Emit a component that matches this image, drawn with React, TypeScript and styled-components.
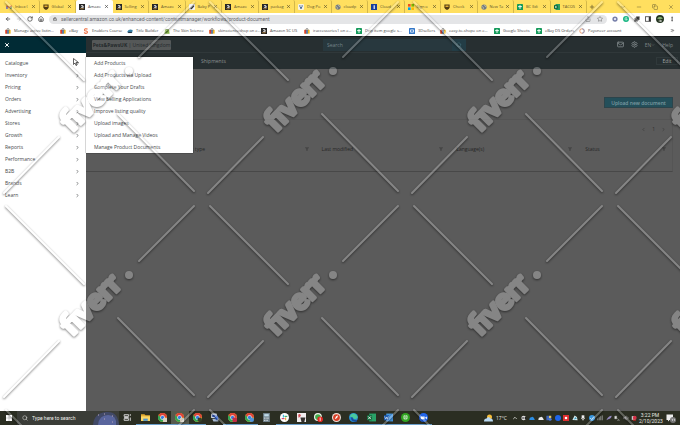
import React from "react";
import styled, { createGlobalStyle } from "styled-components";
import {
  ArrowLeft, ArrowRight, RotateCw, Home, Lock, Share, Star, Puzzle, MoreVertical, X, Plus, ChevronDown,
  ChevronRight, ChevronLeft, ChevronUp, Minus, Copy, Mail, Settings, Search, Filter, ChevronsRight,
} from "lucide-react";

const Global = createGlobalStyle`
  * { box-sizing: border-box; }
  body { margin: 0; background: #5b5b5b; }
  button, input, table { font: inherit; color: inherit; }
  button { border: 0; padding: 0; background: none; display: flex; align-items: center; justify-content: center; }
  a { color: inherit; text-decoration: none; }
  svg { flex: none; display: block; }
`;

const Screen = styled.div`
  min-height: 100vh;
  display: flex;
  flex-direction: column;
  font-family: "Open Sans", sans-serif;
  font-size: 5px;
  line-height: 6px;
  color: #333;
  overflow: hidden;
`;

/* ---------- browser ---------- */
const TabStrip = styled.div`
  display: flex;
  align-items: center;
  height: 13px;
  padding-left: 3px;
  background: #ffdf5f;
  font-size: 4px;
`;
const Tab = styled.div<{ $active?: boolean }>`
  flex: 1 1 0;
  min-width: 0;
  height: 13px;
  padding: 0 3px;
  display: flex;
  align-items: center;
  gap: 3px;
  color: ${(p) => (p.$active ? "#444" : "#5c512a")};
  background: ${(p) => (p.$active ? "#fff" : "transparent")};
  border-radius: 2px 2px 0 0;
  border-right: 1px solid ${(p) => (p.$active ? "#fff" : "#d4b84a")};
`;
const TabTitle = styled.span`
  flex: 1;
  min-width: 0;
  white-space: nowrap;
`;
const WindowControls = styled.div`
  flex: none;
  width: 93px;
  display: flex;
  align-items: center;
  justify-content: space-between;
  padding: 0 6px 0 2px;
  color: #6d6132;
`;
const ControlGroup = styled.div`
  display: flex;
  align-items: center;
  gap: 10px;
`;
const Toolbar = styled.div`
  display: flex;
  align-items: center;
  gap: 5px;
  height: 12px;
  padding: 0 5px;
  background: #fff;
  color: #444;
`;
const Omnibox = styled.form`
  flex: 1;
  display: flex;
  align-items: center;
  gap: 4px;
  height: 9px;
  padding: 0 4px;
  border-radius: 5px;
  background: #e4e5e7;
  color: #666;
`;
const UrlInput = styled.input`
  flex: 1;
  min-width: 0;
  height: 8px;
  padding: 0;
  border: 0;
  outline: 0;
  background: transparent;
  color: #66686c;
  font-family: Roboto, sans-serif;
`;
const OmniIcons = styled.div`
  display: flex;
  align-items: center;
  gap: 6px;
`;
const ToolIcons = styled.div`
  display: flex;
  align-items: center;
  gap: 5px;
`;
const Bookmarks = styled.nav`
  display: flex;
  align-items: center;
  height: 12px;
  padding: 0 5px;
  background: #fff;
  border-bottom: 1px solid #16191a;
  font-size: 4px;
`;
const Bookmark = styled.a<{ $w: number }>`
  width: ${(p) => p.$w}px;
  display: flex;
  align-items: center;
  gap: 3px;
  white-space: nowrap;
  color: #444;
  &:last-of-type { flex: 1; }
`;

/* ---------- application ---------- */
const AppGrid = styled.div`
  flex: 1;
  display: grid;
  grid-template-columns: 86px minmax(0, 1fr);
`;
const Sidebar = styled.aside`
  position: relative;
  background: #fff;
`;
const SideTop = styled.div`
  height: 16px;
  display: flex;
  align-items: center;
  padding-left: 4px;
  background: #012b35;
  color: #fff;
`;
const MenuList = styled.ul`
  list-style: none;
  margin: 0;
  padding: 4px 6px 0 5px;
`;
const MenuItem = styled.li`
  height: 12px;
`;
const MenuButton = styled.button`
  width: 100%;
  height: 12px;
  justify-content: space-between;
  color: #45494b;
`;
const Flyout = styled.ul`
  position: absolute;
  z-index: 2;
  left: 86px;
  top: 20px;
  width: 107px;
  margin: 0;
  padding: 0 8px;
  list-style: none;
  background: #fff;
  box-shadow: 0 0 1px #111;
  color: #45494b;
`;
const FlyItem = styled.li`
  height: 12px;
  display: flex;
  align-items: center;
  white-space: nowrap;
`;
const Pointer = styled.svg`
  position: absolute;
  z-index: 3;
  left: 73px;
  top: 21px;
`;
const Main = styled.main`
  background: #5b5b5b;
`;
const Header = styled.header`
  display: flex;
  align-items: center;
  height: 16px;
  padding: 0 7px 0 6px;
  background: #272f31;
  border-bottom: 1px solid #30383a;
  color: #7d8587;
`;
const Account = styled.button`
  width: 79px;
  height: 10px;
  border-radius: 1px;
  background: #555858;
  color: #24292b;
  white-space: pre;
`;
const SearchForm = styled.form`
  display: flex;
  width: 143px;
  height: 12px;
  margin: 0 auto 0 152px;
  background: #28383e;
`;
const SearchInput = styled.input`
  flex: 1;
  min-width: 0;
  padding: 0 4px;
  border: 0;
  background: transparent;
  &::placeholder { color: #75858a; opacity: 1; }
`;
const SearchButton = styled.button`
  width: 14px;
  background: #233d46;
  color: #426c77;
`;
const Utilities = styled.div`
  display: flex;
  align-items: center;
  gap: 7px;
`;
const SubNav = styled.nav`
  display: flex;
  align-items: center;
  justify-content: space-between;
  height: 16px;
  padding: 0 2px 0 115px;
  background: #272f31;
  color: #8b9192;
`;
const EditButton = styled.button`
  width: 22px;
  height: 8px;
  border: 1px solid #30393b;
  color: #a0a5a6;
`;
const Actions = styled.div`
  display: flex;
  justify-content: flex-end;
  padding: 28px 7px 11px 0;
`;
const Upload = styled.button`
  width: 69px;
  height: 11px;
  background: #244f5a;
  border: 1px solid #2c444b;
  color: #7c9ba3;
  font-weight: 600;
`;
const Panel = styled.section`
  margin-right: 7px;
  border: solid #555;
  border-width: 1px 1px 1px 0;
  border-bottom-color: #484848;
`;
const Pager = styled.div`
  display: flex;
  justify-content: flex-end;
  align-items: center;
  gap: 6px;
  height: 18px;
  padding-right: 6px;
  color: #2f2f2f;
`;
const Documents = styled.table`
  width: 100%;
  table-layout: fixed;
  border-collapse: collapse;
  color: #2e2e2e;
`;
const Column = styled.col<{ $w: string }>`
  width: ${(p) => p.$w};
`;
const Heading = styled.th`
  height: 33px;
  padding: 0 6px 12px 7px;
  font-weight: 400;
  text-align: left;
`;
const HeadingRow = styled.div`
  display: flex;
  align-items: center;
  justify-content: space-between;
  color: #262626;
  svg { color: #444; }
`;

/* ---------- taskbar ---------- */
const Taskbar = styled.footer`
  display: flex;
  align-items: stretch;
  height: 14px;
  background: #2b2e22;
  color: #e8e8e4;
`;
const StartButton = styled.button`
  width: 17px;
`;
const TaskSearch = styled.label`
  display: flex;
  align-items: center;
  gap: 4px;
  width: 102px;
  padding-left: 5px;
  background: #3b3d38;
`;
const TaskInput = styled.input`
  width: 57px;
  padding: 0;
  border: 0;
  background: transparent;
  font-family: Roboto, sans-serif;
  &::placeholder { color: #f0f0ec; opacity: 1; }
`;
const Apps = styled.div`
  display: flex;
  width: 313px;
`;
const AppButton = styled.button<{ $open?: boolean; $active?: boolean }>`
  flex: 1;
  border-bottom: 1px solid ${(p) => (p.$open ? "#6ba0cc" : "transparent")};
  background: ${(p) => (p.$active ? "#565a4e" : "transparent")};
`;
const Weather = styled.button`
  gap: 3px;
  margin-left: auto;
`;
const Tray = styled.div`
  display: flex;
  align-items: center;
  justify-content: space-between;
  width: 132px;
  padding: 0 2px 0 5px;
`;
const Clock = styled.time`
  display: flex;
  flex-direction: column;
  justify-content: center;
  width: 22px;
  text-align: center;
  font-family: Roboto, sans-serif;
`;
const Notifications = styled.button`
  width: 19px;
`;

const Watermark = styled.svg`
  position: fixed;
  z-index: 10;
  inset: 0;
  width: 100%;
  height: 100%;
  pointer-events: none;
`;

/* ---------- icons ---------- */
type Kind =
  | "gmail" | "amazon" | "shield" | "navy" | "baby" | "paw" | "globe" | "ms" | "sheet" | "excel" | "bag"
  | "swirl" | "title" | "leaf" | "blue" | "ring" | "green" | "avatar" | "panel" | "purple";

const Fav = ({ k, s = 6 }: { k: Kind; s?: number }) => {
  const art: Record<Kind, React.ReactNode> = {
    gmail: <><path d="M1 3v10h3V7l4 3 4-3v6h3V3l-7 5z" fill="#e0473c" /><path d="M1 6v7h3V8z" fill="#4285f4" /><path d="M15 6v7h-3V8z" fill="#34a853" /></>,
    amazon: <><rect width="16" height="16" fill="#262626" /><path d="M5 5q3-3 6 0v5H7q-2-2 4-3" fill="none" stroke="#fff" strokeWidth="2" /><path d="M3 12q5 3 10 0" fill="none" stroke="#e7a13a" strokeWidth="1.5" /></>,
    shield: <><path d="M1 1h14v8q-1 5-7 7-6-2-7-7z" fill="#523c14" /><path d="M4 4h8v4H4z" fill="#e4ae34" /></>,
    navy: <><rect width="16" height="16" fill="#173f9c" /><path d="M7 3h3v10H7z" fill="#fff" /></>,
    baby: <><rect width="16" height="16" rx="2" fill="#f4f4f4" /><path d="M3 13 12 3l2 3-7 8z" fill="#343434" /></>,
    paw: <><rect width="16" height="16" rx="3" fill="#f8f4e2" /><circle cx="8" cy="10" r="3" fill="#46689c" /><circle cx="5" cy="5" r="2" fill="#46689c" /><circle cx="11" cy="5" r="2" fill="#46689c" /></>,
    globe: <><circle cx="8" cy="8" r="7" fill="#747c84" /><path d="M3 6q5 4 3 7M9 2q1 5 5 5" stroke="#ded6a5" strokeWidth="2" fill="none" /></>,
    ms: <><path fill="#f25022" d="M0 0h7v7H0z" /><path fill="#7fba00" d="M9 0h7v7H9z" /><path fill="#00a4ef" d="M0 9h7v7H0z" /><path fill="#ffb900" d="M9 9h7v7H9z" /></>,
    sheet: <><rect width="16" height="16" rx="1" fill="#159a5b" /><path d="M3 7h10M8 3v10" stroke="#fff" strokeWidth="2.5" /></>,
    excel: <><rect x="4" width="12" height="16" fill="#2c9b62" /><rect y="3" width="10" height="10" fill="#0b6539" /><path d="m3 5 4 6m0-6-4 6" stroke="#fff" strokeWidth="1.5" /></>,
    bag: <><path d="M1 5h14v10H1z" fill="#f3b51b" /><path d="M1 5h5v10H1z" fill="#d93a3a" /><path d="M6 5h4v10H6z" fill="#3070c8" /><path d="M5 6q0-5 3-5t3 5" fill="none" stroke="#444" strokeWidth="1.5" /></>,
    swirl: <path d="M12 3Q5 0 4 5q0 3 5 3 4 1 2 5-4 3-8-1" fill="none" stroke="#ef7043" strokeWidth="3" />,
    title: <><path d="M1 9q4-8 14-4l-1 7H1z" fill="#357ea4" /><path d="M3 12h10" stroke="#263648" strokeWidth="3" /></>,
    leaf: <><path d="M3 3h10l2 12H1z" fill="#8ab74b" /><path d="M5 6q3-6 6 0M5 12l5-3" fill="none" stroke="#385a25" strokeWidth="2" /></>,
    blue: <><rect width="16" height="16" rx="1" fill="#3478c9" /><path d="M4 5h8v6H4z" stroke="#fff" strokeWidth="2" fill="none" /></>,
    ring: <><circle cx="8" cy="8" r="6" fill="none" stroke="#e8864b" strokeWidth="2" /><path d="M8 2a6 6 0 0 1 0 12" fill="none" stroke="#7290d1" strokeWidth="2" /></>,
    green: <><circle cx="8" cy="8" r="8" fill="#19b682" /><path d="M11 5q-5-3-6 3 1 5 6 2V8H8" fill="none" stroke="#fff" strokeWidth="1.6" /></>,
    avatar: <><circle cx="8" cy="8" r="8" fill="#233420" /><path d="M2 7q6-7 12 0L8 9z" fill="#80a970" /><path d="m4 12 7-2v4z" fill="#e2e2dc" /></>,
    panel: <><rect x="1" y="2" width="14" height="12" fill="#fff" stroke="#333" strokeWidth="2" /><path d="M10 2h5v12h-5z" fill="#333" /></>,
    purple: <><circle cx="8" cy="8" r="7" fill="#7880aa" /><circle cx="8" cy="8" r="3" fill="#eef" /></>,
  };
  return <svg width={s} height={s} viewBox="0 0 16 16" aria-hidden="true">{art[k]}</svg>;
};

type AppKind =
  | "view" | "folder" | "chrome" | "chromeRed" | "chromeGreen" | "chromeBlue" | "monitor" | "calc" | "slack"
  | "photo" | "whatsapp" | "compass" | "edge" | "excel" | "word" | "qb" | "zoom";

const Wheel = () => (
  <>
    <circle cx="8" cy="8" r="8" fill="#f1bf2c" />
    <path d="M8 8H16A8 8 0 0 0 1 4L5 10z" fill="#dc4538" />
    <path d="M1 4a8 8 0 0 0 7 12l3-7H6z" fill="#31a354" />
    <circle cx="8" cy="8" r="4" fill="#fff" /><circle cx="8" cy="8" r="3" fill="#397de0" />
  </>
);

const AppIcon = ({ k }: { k: AppKind }) => {
  const art: Record<AppKind, React.ReactNode> = {
    view: <path d="M2 3h8v3H2zm0 7h8v3H2zM2 8h8m3-6v3m0 3v6" fill="none" stroke="#ddd" strokeWidth="1.6" />,
    folder: <><path d="M0 2h6l2 2h8v10H0z" fill="#e5ad31" /><path d="M0 6h16v8H0z" fill="#fbd767" /><path d="M4 10h8v4H4z" fill="#4f96cc" /></>,
    chrome: <><Wheel /><path d="M9 9h7v7H9z" fill="#d7d1c5" /></>,
    chromeRed: <><Wheel /><rect x="8" y="8" width="8" height="8" rx="2" fill="#c42b47" /></>,
    chromeGreen: <><Wheel /><circle cx="12" cy="12" r="4" fill="#364029" /></>,
    chromeBlue: <><Wheel /><circle cx="12" cy="12" r="4" fill="#4f93db" /></>,
    monitor: <><rect x="2" y="1" width="10" height="8" rx="1" fill="#d5dfeb" /><path d="M4 3h6v4H4z" fill="#294fae" /><path d="M4 10h11v5H6z" fill="#a9bbd4" /><path d="m8 8 5-4 2 6-4 3z" fill="#2c5fd0" /></>,
    calc: <><rect x="2" width="12" height="16" fill="#72848e" /><path d="M4 2h8v4H4z" fill="#bfdae9" /><path d="M4 9h2m2 0h2m1 0h1M4 13h2m2 0h2" stroke="#e3e8eb" strokeWidth="2" /></>,
    slack: <><circle cx="8" cy="8" r="8" fill="#fff" /><path d="M6 3v5" stroke="#36b8db" strokeWidth="2" /><path d="M13 6H8" stroke="#34ab75" strokeWidth="2" /><path d="M10 13V8" stroke="#e5b137" strokeWidth="2" /><path d="M3 10h5" stroke="#d23e68" strokeWidth="2" /></>,
    photo: <><rect width="16" height="16" fill="#f1eeee" /><path d="M2 3q4-3 5 2L3 9z" fill="#d34e54" /><path d="M6 8h9l-2 8H8z" fill="#34302e" /></>,
    whatsapp: <><circle cx="7" cy="7" r="7" fill="#eff5ec" /><circle cx="7" cy="7" r="5" fill="#42ac4b" /><circle cx="11" cy="11" r="5" fill="#e22922" /><path d="M11 8v6" stroke="#fff" strokeWidth="1.5" /></>,
    compass: <><circle cx="8" cy="8" r="8" fill="#eee0d8" /><circle cx="8" cy="8" r="6" fill="#d84128" /><path d="m5 11 2-5 4-2-2 5z" fill="#fff" /></>,
    edge: <><circle cx="8" cy="8" r="8" fill="#258ad0" /><path d="M1 6Q5-2 13 3q6 7-3 8-4-5-9-5" fill="#48c99d" /><path d="M5 8q0 7 9 6" stroke="#174b99" strokeWidth="3" fill="none" /></>,
    excel: <><path d="M4 1h12v14H4z" fill="#29a268" /><path d="M0 4h9v9H0z" fill="#12693b" /><path d="m2 6 5 5m0-5-5 5" stroke="#fff" strokeWidth="1.5" /></>,
    word: <><path d="M4 1h12v14H4z" fill="#4696df" /><path d="M0 4h9v9H0z" fill="#1858ae" /><path d="m1 6 2 5 2-4 1 4 2-5" stroke="#fff" fill="none" /></>,
    qb: <><circle cx="8" cy="8" r="8" fill="#30a421" /><path d="M7 5H5v5h2m2-5h2v5H9M7 4v8m2-8v8" stroke="#fff" fill="none" /></>,
    zoom: <><circle cx="8" cy="8" r="8" fill="#2266ed" /><path d="M3 6h7v5H3zm8 2 3-2v5l-3-2" fill="#fff" /></>,
  };
  return <svg width="9" height="9" viewBox="0 0 16 16" aria-hidden="true">{art[k]}</svg>;
};

const trayArt: React.ReactNode[] = [
  <><circle cx="7" cy="8" r="6" fill="#ddd" /><path d="M3 8h6m3-3v6" stroke="#222" strokeWidth="3" /></>,
  <path d="M1 12q0-6 5-6 5-5 9 5v2H1z" fill="#2c8de2" />,
  <path d="M1 12q0-6 5-6 5-5 9 5v2H1z" fill="#eee" />,
  <><path d="M1 2h7v12H1z" fill="#3f65b9" /><path d="M8 2h6v6H8z" fill="#e2c865" /><circle cx="11" cy="11" r="4" fill="#4d79cd" /></>,
  <circle cx="8" cy="8" r="8" fill="#1e65e9" />,
  <><rect width="16" height="16" fill="#df2f30" /><path d="M5 5h6v6H5z" fill="#fff" /></>,
  <><path d="M1 13 7 1l6 4 2 9z" fill="#d5eaed" /><path d="m5 12 4-7 4 5z" fill="#3a9bbb" /></>,
  <path d="M5 1h6v9H5zM3 8q5 8 10 0M8 11v5" fill="#eee" stroke="#eee" />,
  <><circle cx="8" cy="8" r="8" fill="#3797e0" /><path d="m3 8 4 4 6-8" stroke="#fff" strokeWidth="2" fill="none" /></>,
  <path d="M2 14V9m4 5V6m4 8V3m4 11V1" stroke="#aaa" strokeWidth="2" />,
  <path d="M1 14Q6 2 15 2q0 8-9 9z" fill="#9287bd" />,
  <path d="M2 3h5v7H2zm7 6 5 5m-6 0h7" fill="#ddd" stroke="#ddd" />,
  <path d="M1 6h4l4-4v12l-4-4H1zm11-2q5 4 0 8" fill="#888" stroke="#888" />,
  <><path d="M2 3h10v10H2z" fill="#ccc" /><circle cx="10" cy="7" r="5" fill="#d22f45" /><path d="M5 12h8v3H5z" fill="#c22" /></>,
];

/* ---------- data ---------- */
const tabs: [Kind, string][] = [
  ["gmail", "Inbox ("], ["shield", "Global"], ["amazon", "Amazo"], ["amazon", "Selling"], ["amazon", "Amazo"],
  ["baby", "Baby P"], ["amazon", "Amazo"], ["amazon", "packag"], ["paw", "Dog Po"], ["globe", "cloudp"],
  ["navy", "Cloud"], ["ms", "Sign o"], ["shield", "Check"], ["globe", "New Ta"], ["sheet", "BC Edi"], ["excel", "TACOS"],
];
const bookmarks: [Kind, string, number][] = [
  ["bag", "Manage active listin...", 55], ["bag", "eBay", 23], ["swirl", "Enablers Course", 44], ["title", "Title Builder", 37],
  ["leaf", "The Skin Science", 45], ["bag", "skinscienceshop on e...", 52], ["amazon", "Amazon SC US", 43],
  ["bag", "iraccessories1 on e...", 52], ["sheet", "Drip item google s...", 53], ["blue", "3Dsellers", 31],
  ["bag", "easy-to-shope on e...", 54], ["sheet", "Google Sheets", 42], ["sheet", "eBay DS Orders", 43], ["ring", "Payoneer account", 60],
];
const menu = ["Catalogue", "Inventory", "Pricing", "Orders", "Advertising", "Stores", "Growth", "Reports", "Performance", "B2B", "Brands", "Learn"];
const flyout = [
  "Add Products", "Add Products via Upload", "Complete Your Drafts", "View Selling Applications",
  "Improve listing quality", "Upload images", "Upload and Manage Videos", "Manage Product Documents",
];
const columns: [string, string][] = [
  ["", "13%"], ["Document type", "26%"], ["Last modified", "23%"], ["Language(s)", "22%"], ["Status", "16%"],
];
const apps: [AppKind, boolean][] = [
  ["view", false], ["folder", true], ["chrome", true], ["chrome", true], ["chromeGreen", true], ["monitor", false],
  ["chromeRed", true], ["chromeBlue", true], ["calc", false], ["slack", true], ["photo", true], ["whatsapp", true],
  ["compass", true], ["edge", true], ["excel", true], ["word", true], ["qb", true], ["zoom", true],
];

export default function App() {
  return (
    <Screen>
      <Global />
      <TabStrip>
        {tabs.map(([k, t], i) => (
          <Tab key={i} $active={i === 2}>
            <Fav k={k} />
            <TabTitle>{t}</TabTitle>
            <button aria-label={`Close ${t}`}><X size={5} strokeWidth={3} /></button>
          </Tab>
        ))}
        <WindowControls>
          <button aria-label="New tab"><Plus size={6} strokeWidth={3} /></button>
          <ControlGroup>
            <button aria-label="Search tabs"><ChevronDown size={6} /></button>
            <button aria-label="Minimise"><Minus size={6} /></button>
            <button aria-label="Restore"><Copy size={6} /></button>
            <button aria-label="Close window"><X size={6} /></button>
          </ControlGroup>
        </WindowControls>
      </TabStrip>
      <Toolbar>
        <button aria-label="Back"><ArrowLeft size={6} strokeWidth={3} /></button>
        <button aria-label="Forward"><ArrowRight size={6} color="#aaa" /></button>
        <button aria-label="Reload"><RotateCw size={6} strokeWidth={3} /></button>
        <button aria-label="Home"><Home size={6} strokeWidth={3} /></button>
        <Omnibox>
          <Lock size={4} strokeWidth={4} />
          <UrlInput aria-label="Address" defaultValue="sellercentral.amazon.co.uk/enhanced-content/contentmanager/workflows/product-document" />
          <OmniIcons><Share size={6} /><Star size={6} /></OmniIcons>
        </Omnibox>
        <ToolIcons>
          <Fav k="purple" /><Fav k="green" /><Puzzle size={6} fill="#333" /><Fav k="panel" /><Fav k="avatar" s={8} />
          <button aria-label="Browser menu"><MoreVertical size={6} strokeWidth={3} /></button>
        </ToolIcons>
      </Toolbar>
      <Bookmarks aria-label="Bookmarks">
        {bookmarks.map(([k, t, w]) => (
          <Bookmark key={t} href="#" $w={w}><Fav k={k} />{t}</Bookmark>
        ))}
        <ChevronsRight size={5} strokeWidth={3} />
      </Bookmarks>

      <AppGrid>
        <Sidebar>
          <SideTop><button aria-label="Close menu"><X size={6} strokeWidth={4} /></button></SideTop>
          <MenuList>
            {menu.map((m) => (
              <MenuItem key={m}><MenuButton>{m}<ChevronRight size={5} strokeWidth={3} /></MenuButton></MenuItem>
            ))}
          </MenuList>
          <Flyout>
            {flyout.map((m) => <FlyItem key={m}><a href="#">{m}</a></FlyItem>)}
          </Flyout>
          <Pointer width="6" height="8" viewBox="0 0 12 16" aria-hidden="true">
            <path d="M1 1v12l3-3 2 5 2-1-2-5h5z" fill="#fff" stroke="#333" strokeWidth="1.5" />
          </Pointer>
        </Sidebar>
        <Main>
          <Header>
            <Account><b>Pets&amp;PawsUK</b>{" | United Kingdom"}</Account>
            <SearchForm>
              <SearchInput aria-label="Search" placeholder="Search" />
              <SearchButton aria-label="Submit search"><Search size={6} /></SearchButton>
            </SearchForm>
            <Utilities>
              <Mail size={7} strokeWidth={3} /><Settings size={7} strokeWidth={3} />
              <button>EN<ChevronDown size={4} /></button><a href="#">Help</a>
            </Utilities>
          </Header>
          <SubNav><a href="#">Shipments</a><EditButton>Edit</EditButton></SubNav>
          <Actions><Upload>Upload new document</Upload></Actions>
          <Panel>
            <Pager>
              <button aria-label="Previous page"><ChevronLeft size={5} /></button>
              <span>1</span>
              <button aria-label="Next page"><ChevronRight size={5} /></button>
            </Pager>
            <Documents>
              <colgroup>{columns.map(([c, w]) => <Column key={c} $w={w} />)}</colgroup>
              <thead>
                <tr>
                  {columns.map(([c]) =>
                    c ? (
                      <Heading key={c} scope="col"><HeadingRow>{c}<Filter size={4} fill="currentColor" /></HeadingRow></Heading>
                    ) : (
                      <td key="blank" />
                    ),
                  )}
                </tr>
              </thead>
            </Documents>
          </Panel>
        </Main>
      </AppGrid>

      <Taskbar>
        <StartButton aria-label="Start">
          <svg width="6" height="6" viewBox="0 0 12 12"><path d="M0 0h12v12H0z" fill="#fff" /><path d="M6 0v12M0 6h12" stroke="#999" /></svg>
        </StartButton>
        <TaskSearch>
          <Search size={6} />
          <TaskInput aria-label="Type here to search" placeholder="Type here to search" />
          <svg width="26" height="14" viewBox="0 0 26 14" aria-hidden="true">
            <path d="M0 14Q1 2 13 1t13 13z" fill="#414967" />
            <path d="M5 14Q6 4 15 4t8 10z" fill="#59659d" />
            <path d="M5 4h1m5-1h1m7 2h1m-9 3h1m7 3h1" stroke="#b9a6ba" />
          </svg>
        </TaskSearch>
        <Apps>
          {apps.map(([k, open], i) => (
            <AppButton key={i} $open={open} $active={i === 3} aria-label={k}><AppIcon k={k} /></AppButton>
          ))}
        </Apps>
        <Weather>
          <svg width="9" height="8" viewBox="0 0 18 16" aria-hidden="true">
            <circle cx="11" cy="6" r="5" fill="#f5bd39" /><path d="M0 15q0-6 5-6 4-6 8 0 5 0 5 6z" fill="#b9d9f2" />
          </svg>
          17°C
        </Weather>
        <Tray>
          <ChevronUp size={6} strokeWidth={3} />
          {trayArt.map((a, i) => <svg key={i} width="6" height="6" viewBox="0 0 16 16" aria-hidden="true">{a}</svg>)}
        </Tray>
        <Clock><span>3:22 PM</span><span>2/10/2023</span></Clock>
        <Notifications aria-label="Notifications">
          <svg width="10" height="9" viewBox="0 0 20 18"><path d="M1 1h13v11H7l-3 3v-3H1z" fill="#eee" /><circle cx="14" cy="12" r="6" fill="#777" /><path d="M11 10h2v4m2-4h2v4" stroke="#fff" fill="none" /></svg>
        </Notifications>
      </Taskbar>

      <Watermark aria-hidden="true">
        <defs>
          <filter id="emboss" x="-10" y="-10" width="224" height="224" filterUnits="userSpaceOnUse" colorInterpolationFilters="sRGB">
            <feGaussianBlur in="SourceAlpha" stdDeviation="1" result="soft" />
            <feOffset in="soft" dx="0" dy="1" result="moved" />
            <feComposite in="moved" in2="SourceAlpha" operator="out" result="edge" />
            <feComponentTransfer in="edge" result="shade"><feFuncA type="linear" slope="0.5" /></feComponentTransfer>
            <feComponentTransfer in="SourceGraphic" result="face"><feFuncA type="linear" slope="0.26" /></feComponentTransfer>
            <feMerge><feMergeNode in="shade" /><feMergeNode in="face" /></feMerge>
          </filter>
          <pattern id="tile" width="204" height="204" patternUnits="userSpaceOnUse">
            <g filter="url(#emboss)">
              <path d="M6 2 84 80M118 114l76 77M194 2l-55 55M59 137 4 193" fill="none" stroke="#fff" strokeWidth="2" strokeLinecap="round" />
              <text transform="translate(72 133) rotate(-45)" fontFamily="Lato, sans-serif" fontWeight="900" fontSize="30" fill="#fff" stroke="#fff" strokeWidth="3" strokeLinejoin="round">fiverr</text>
              <circle cx="129" cy="71" r="4" fill="#fff" />
            </g>
          </pattern>
        </defs>
        <rect width="100%" height="100%" fill="url(#tile)" />
      </Watermark>
    </Screen>
  );
}
